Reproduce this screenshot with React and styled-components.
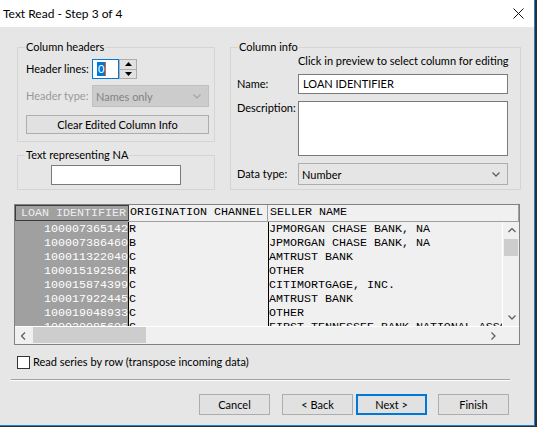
import styled, { createGlobalStyle } from "styled-components";

const UI_FONT = `"Lato", "Liberation Sans", sans-serif`;
const MONO = `"Liberation Mono", "DejaVu Sans Mono", monospace`;
const BG = "#e6e6e6";

const GlobalStyle = createGlobalStyle`
  html, body { margin: 0; padding: 0; background: #2e2e2e; }
  body { width: 537px; height: 427px; overflow: hidden; }
  * { box-sizing: border-box; }
`;

const Window = styled.div`
  width: 535px;
  height: 426px;
  background: ${BG};
  border-right: 1px solid #1883d7;
  border-bottom: 1px solid #1883d7;
  display: flex;
  flex-direction: column;
  font-family: ${UI_FONT};
  font-size: 11px;
  color: #000;
  white-space: nowrap;
`;

const TitleBar = styled.div`
  height: 27px;
  flex: none;
  background: #fff;
  display: flex;
  align-items: center;
  justify-content: space-between;
  padding: 0 10px 0 3px;
`;

const Title = styled.span`
  font-size: 12px;
  line-height: 14px;
`;

const Content = styled.div`
  display: flex;
  flex-direction: column;
  padding: 0 14px;
`;

const TopRow = styled.div`
  display: flex;
  gap: 15px;
  margin-top: 20px;
  padding-left: 3px;
`;

const LeftCol = styled.div`
  width: 198px;
  display: flex;
  flex-direction: column;
  gap: 13px;
`;

const Group = styled.div`
  position: relative;
  border: 1px solid #d5d5d5;
  height: ${(p) => p.$h}px;
  width: ${(p) => p.$w}px;
  padding: ${(p) => p.$pad};
  display: flex;
  flex-direction: column;
`;

const GroupLabel = styled.span`
  position: absolute;
  top: -8px;
  left: 7px;
  padding: 0 1px;
  background: ${BG};
  line-height: 14px;
`;

const Row = styled.div`
  display: flex;
  align-items: center;
  margin-top: ${(p) => p.$mt || 0}px;
`;

const FieldLabel = styled.span`
  width: ${(p) => p.$w}px;
  flex: none;
  line-height: 14px;
  color: ${(p) => (p.$disabled ? "#9a9a9a" : "#000")};
  align-self: ${(p) => (p.$top ? "flex-start" : "center")};
`;

const SpinInput = styled.div`
  width: 27px;
  height: 20px;
  border: 1px solid #0078d7;
  background: #fff;
  display: flex;
  align-items: center;
  padding-left: 4px;
`;

const Selected = styled.span`
  background: #0078d7;
  color: #fff;
  line-height: 14px;
  padding: 0 1px;
  border-right: 1px solid #f7630c;
`;

const SpinButtons = styled.div`
  width: 18px;
  height: 20px;
  border: 1px solid #adadad;
  background: #e1e1e1;
  display: flex;
  flex-direction: column;
`;

const SpinHalf = styled.div`
  flex: 1;
  display: flex;
  align-items: center;
  justify-content: center;
  & + & {
    border-top: 1px solid #adadad;
  }
`;

const Select = styled.div`
  width: ${(p) => p.$w}px;
  height: ${(p) => p.$h}px;
  border: 1px solid ${(p) => (p.$disabled ? "#bfbfbf" : "#adadad")};
  background: ${(p) => (p.$disabled ? "#cccccc" : "#e5e5e5")};
  color: ${(p) => (p.$disabled ? "#838383" : "#000")};
  display: flex;
  align-items: center;
  justify-content: space-between;
  padding: 0 7px 0 3px;
`;

const PushButton = styled.button`
  width: ${(p) => p.$w}px;
  height: ${(p) => p.$h}px;
  border: ${(p) => (p.$default ? "2px solid #0078d7" : "1px solid #adadad")};
  background: #e1e1e1;
  font-family: ${UI_FONT};
  font-size: 11px;
  color: #000;
  padding: 0;
  margin-top: ${(p) => p.$mt || 0}px;
`;

const TextBox = styled.div`
  width: ${(p) => p.$w}px;
  height: ${(p) => p.$h}px;
  border: 1px solid #7a7a7a;
  background: #fff;
  padding: 2px 4px;
  line-height: 14px;
  align-self: ${(p) => (p.$center ? "center" : "auto")};
`;

const Hint = styled.div`
  margin-left: 61px;
  line-height: 14px;
`;

/* preview grid */

const Grid = styled.div`
  margin-top: 14px;
  width: 506px;
  height: 141px;
  border: 1px solid #828282;
  background: #f0f0f0;
  display: flex;
  flex-direction: column;
  font-family: ${MONO};
  font-size: 11.67px;
  overflow: hidden;
`;

const HeaderRow = styled.div`
  height: 17px;
  flex: none;
  display: flex;
  border-bottom: 1px solid #a0a0a0;
`;

const HeaderCell = styled.div`
  width: ${(p) => (p.$w ? `${p.$w}px` : "auto")};
  flex: ${(p) => (p.$w ? "none" : 1)};
  line-height: 15px;
  overflow: hidden;
  background: ${(p) => (p.$sel ? "#a0a0a0" : "#f0f0f0")};
  color: ${(p) => (p.$sel ? "#eeeeee" : "#000")};
  border: ${(p) => (p.$sel ? "1px solid #3c3c3c" : "none")};
  border-right: 1px solid ${(p) => (p.$sel ? "#3c3c3c" : "#a0a0a0")};
  padding-left: ${(p) => p.$pl}px;
`;

const Body = styled.div`
  height: 104px;
  flex: none;
  display: flex;
`;

const DataArea = styled.div`
  flex: 1;
  overflow: hidden;
  display: flex;
  flex-direction: column;
`;

const DataRow = styled.div`
  height: 14px;
  flex: none;
  display: flex;
  line-height: 14px;
`;

const DataCell = styled.div`
  width: ${(p) => (p.$w ? `${p.$w}px` : "auto")};
  flex: ${(p) => (p.$w ? "none" : 1)};
  overflow: hidden;
  text-align: ${(p) => (p.$sel ? "right" : "left")};
  background: ${(p) => (p.$sel ? "#a0a0a0" : "transparent")};
  color: ${(p) => (p.$sel ? "#ffffff" : "#000")};
  border-left: ${(p) => (p.$sel ? "none" : "1px solid #000")};
`;

const VScroll = styled.div`
  width: 17px;
  flex: none;
  display: flex;
  flex-direction: column;
  border-left: 1px solid #ffffff;
`;

const ScrollBtn = styled.div`
  width: 17px;
  height: 17px;
  flex: none;
  display: flex;
  align-items: center;
  justify-content: center;
`;

const VThumb = styled.div`
  height: 17px;
  margin: 0 1px;
  background: #cdcdcd;
`;

const Track = styled.div`
  flex: 1;
`;

const HScroll = styled.div`
  height: 18px;
  flex: none;
  display: flex;
  border-top: 1px solid #ffffff;
`;

const HThumb = styled.div`
  width: 113px;
  margin: 0 0 1px 1px;
  background: #cdcdcd;
`;

const Corner = styled.div`
  width: 17px;
  flex: none;
`;

const CheckRow = styled.label`
  display: flex;
  align-items: center;
  gap: 3px;
  margin: 10px 0 0 3px;
  line-height: 14px;
`;

const CheckBox = styled.span`
  width: 13px;
  height: 13px;
  border: 1px solid #333;
  background: #fff;
`;

const Separator = styled.div`
  margin: 10px 0 0 -3px;
  width: 499px;
  height: 2px;
  border-top: 1px solid #a0a0a0;
  border-bottom: 1px solid #ffffff;
`;

const ButtonBar = styled.div`
  display: flex;
  justify-content: flex-end;
  margin-top: 13px;
  padding-right: 11px;
`;

const Chevron = ({ dir = "down", color = "#606060", w = 8 }) => {
  const pts = {
    down: "0.5,0.5 4,4 7.5,0.5",
    up: "0.5,4 4,0.5 7.5,4",
    left: "4,0.5 0.5,4 4,7.5",
    right: "0.5,0.5 4,4 0.5,7.5",
  }[dir];
  const vertical = dir === "up" || dir === "down";
  return (
    <svg width={vertical ? w : 5} height={vertical ? 5 : 8} viewBox={vertical ? "0 0 8 5" : "0 0 5 8"}>
      <polyline points={pts} fill="none" stroke={color} strokeWidth="1.3" />
    </svg>
  );
};

const Tri = ({ up }) => (
  <svg width="7" height="4" viewBox="0 0 7 4">
    <polygon points={up ? "0,4 3.5,0 7,4" : "0,0 3.5,4 7,0"} fill="#000" />
  </svg>
);

const rows = [
  ["100007365142", "R", "JPMORGAN CHASE BANK, NA"],
  ["100007386460", "B", "JPMORGAN CHASE BANK, NA"],
  ["100011322040", "C", "AMTRUST BANK"],
  ["100015192562", "R", "OTHER"],
  ["100015874399", "C", "CITIMORTGAGE, INC."],
  ["100017922445", "C", "AMTRUST BANK"],
  ["100019048933", "C", "OTHER"],
  ["100020085606", "C", "FIRST TENNESSEE BANK NATIONAL ASSOCIATION"],
];

export default function App() {
  return (
    <>
      <GlobalStyle />
      <Window>
        <TitleBar>
          <Title>Text Read - Step 3 of 4</Title>
          <svg width="11" height="11" viewBox="0 0 11 11">
            <path d="M0.5 0.5 L10.5 10.5 M10.5 0.5 L0.5 10.5" stroke="#111" strokeWidth="1" />
          </svg>
        </TitleBar>
        <Content>
          <TopRow>
            <LeftCol>
              <Group $w={198} $h={95} $pad="11px 4px 0 8px">
                <GroupLabel>Column headers</GroupLabel>
                <Row>
                  <FieldLabel $w={66}>Header lines:</FieldLabel>
                  <SpinInput>
                    <Selected>0</Selected>
                  </SpinInput>
                  <SpinButtons>
                    <SpinHalf><Tri up /></SpinHalf>
                    <SpinHalf><Tri /></SpinHalf>
                  </SpinButtons>
                </Row>
                <Row $mt={6}>
                  <FieldLabel $w={66} $disabled>Header type:</FieldLabel>
                  <Select $w={117} $h={22} $disabled>
                    <span>Names only</span>
                    <Chevron color="#a6a6a6" />
                  </Select>
                </Row>
                <PushButton $w={183} $h={19} $mt={8}>Clear Edited Column Info</PushButton>
              </Group>
              <Group $w={198} $h={35} $pad="9px 0 0 0">
                <GroupLabel>Text representing NA</GroupLabel>
                <TextBox $w={130} $h={20} $center />
              </Group>
            </LeftCol>
            <Group $w={291} $h={143} $pad="6px 12px 0 6px">
              <GroupLabel>Column info</GroupLabel>
              <Hint>Click in preview to select column for editing</Hint>
              <Row $mt={6}>
                <FieldLabel $w={61}>Name:</FieldLabel>
                <TextBox $w={210} $h={20}>LOAN IDENTIFIER</TextBox>
              </Row>
              <Row $mt={7}>
                <FieldLabel $w={61} $top>Description:</FieldLabel>
                <TextBox $w={210} $h={55} />
              </Row>
              <Row $mt={7}>
                <FieldLabel $w={61}>Data type:</FieldLabel>
                <Select $w={210} $h={22}>
                  <span>Number</span>
                  <Chevron />
                </Select>
              </Row>
            </Group>
          </TopRow>

          <Grid>
            <HeaderRow>
              <HeaderCell $w={114} $sel $pl={5}>LOAN IDENTIFIER</HeaderCell>
              <HeaderCell $w={139} $pl={1}>ORIGINATION CHANNEL</HeaderCell>
              <HeaderCell $pl={2}>SELLER NAME</HeaderCell>
            </HeaderRow>
            <Body>
              <DataArea>
                {rows.map((r) => (
                  <DataRow key={r[0]}>
                    <DataCell $w={113} $sel>{r[0]}</DataCell>
                    <DataCell $w={140}>{r[1]}</DataCell>
                    <DataCell>{r[2]}</DataCell>
                  </DataRow>
                ))}
              </DataArea>
              <VScroll>
                <ScrollBtn><Chevron dir="up" /></ScrollBtn>
                <VThumb />
                <Track />
                <ScrollBtn><Chevron dir="down" /></ScrollBtn>
              </VScroll>
            </Body>
            <HScroll>
              <ScrollBtn><Chevron dir="left" /></ScrollBtn>
              <HThumb />
              <Track />
              <ScrollBtn><Chevron dir="right" /></ScrollBtn>
              <Corner />
            </HScroll>
          </Grid>

          <CheckRow>
            <CheckBox />
            Read series by row (transpose incoming data)
          </CheckRow>
          <Separator />
          <ButtonBar>
            <PushButton $w={71} $h={21}>Cancel</PushButton>
            <PushButton $w={71} $h={21} style={{ marginLeft: 12 }}>&lt; Back</PushButton>
            <PushButton $w={71} $h={21} $default style={{ marginLeft: 3 }}>Next &gt;</PushButton>
            <PushButton $w={71} $h={21} style={{ marginLeft: 11 }}>Finish</PushButton>
          </ButtonBar>
        </Content>
      </Window>
    </>
  );
}
